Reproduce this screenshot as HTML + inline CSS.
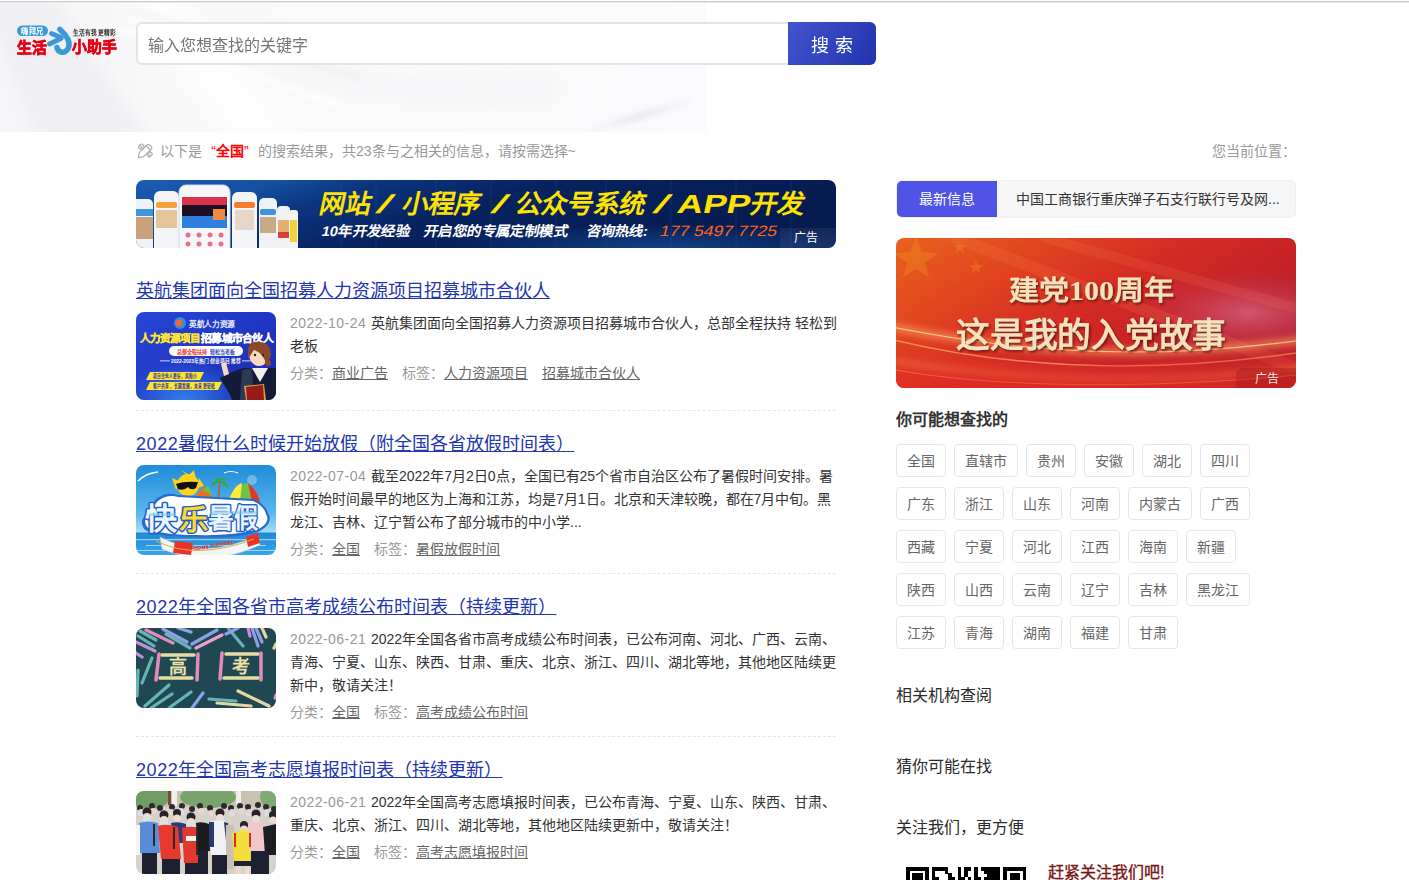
<!DOCTYPE html>
<html lang="zh-CN"><head><meta charset="utf-8">
<style>
*{margin:0;padding:0;box-sizing:border-box}
html,body{width:1409px;height:880px;overflow:hidden;background:#fff}
body{font-family:"Liberation Sans",sans-serif;color:#333;font-size:14px;position:relative}
.abs{position:absolute}
#topline{left:0;top:1px;width:1409px;height:2px;background:linear-gradient(#c9c9c9 0 50%,#ececec 50% 100%)}
#hdr{left:0;top:3px;width:706px;height:129px;overflow:hidden;background:#f7f7f9}
#logo{left:15px;top:24px;width:104px;height:32px}
#search{left:136px;top:22px;width:653px;height:43px;border:2px solid #e4e4e4;border-right:none;border-radius:6px 0 0 6px;background:#fff}
#search span{position:absolute;left:10px;top:11px;font-size:16px;color:#757575;line-height:22px;white-space:nowrap}
#btn{left:788px;top:22px;width:88px;height:43px;border-radius:0 6px 6px 0;background:linear-gradient(120deg,#4255cd,#2133ae);color:#fff;font-size:18px;line-height:43px;white-space:nowrap}
#btn span{position:absolute;top:2.5px}
#crumb{left:160px;top:141px;font-size:14px;color:#999;line-height:20px;white-space:nowrap}
#crumb b{color:#f00;font-weight:bold}
#crumb .q{display:inline-block;width:14px}
#pos{left:1212px;top:141px;font-size:14px;color:#999;line-height:20px;white-space:nowrap}
#ad1{left:136px;top:180px;width:700px;height:68px;border-radius:8px;overflow:hidden}
.t18{position:absolute;left:136px;font-size:18px;line-height:24px;color:#2236b0;text-decoration:underline;text-decoration-thickness:1px;text-underline-offset:1px;white-space:nowrap}
.n18{letter-spacing:.6px}
.thumb{position:absolute;left:136px;width:140px;border-radius:8px;overflow:hidden}
.desc{position:absolute;left:290px;font-size:14px;line-height:23px;color:#333;white-space:nowrap}
.desc .d{color:#999;display:inline-block;width:81px;letter-spacing:.45px}
.n{}
.meta{position:absolute;left:290px;font-size:14px;line-height:20px;color:#999;white-space:nowrap}
.meta u{color:#666;text-decoration:underline;text-underline-offset:1px}
.meta .g{display:inline-block;width:14px}
.sep{position:absolute;left:136px;width:700px;height:1px;border-top:1px dashed #e6e6e6}
#tab{left:896px;top:180px;width:400px;height:38px;border-radius:6px;background:#f6f6f6;border:1px solid #efefef}
#tab .t{position:absolute;left:0;top:0;width:100px;height:36px;background:#4f54e6;border-radius:5px 0 0 5px;color:#fff;text-align:center;line-height:36px;font-size:14px}
#tab .nw{position:absolute;left:119px;top:0;line-height:36px;font-size:14px;color:#333;white-space:nowrap}
#ad2{left:896px;top:238px;width:400px;height:150px;border-radius:8px;overflow:hidden}
.h4{position:absolute;left:896px;font-size:16px;font-weight:bold;color:#333;line-height:22px;white-space:nowrap}
.tag{position:absolute;height:33px;border:1px solid #e6e6e6;border-radius:4px;font-size:14px;color:#666;line-height:33px;text-align:center;white-space:nowrap}
.h4.m{font-weight:500;color:#2a2a2a}
.w2{width:50px}.w3{width:64px}
#qrtext{left:1048px;top:862px;font-size:16px;font-weight:500;color:#781616;-webkit-text-stroke:.35px #781616;line-height:22px;white-space:nowrap}
</style></head>
<body>
<div id="topline" class="abs"></div>
<div id="hdr" class="abs"><svg width="706" height="129" viewBox="0 0 706 129" style="display:block">
<defs><filter id="hb" x="-20%" y="-50%" width="140%" height="200%"><feGaussianBlur stdDeviation="7"/></filter>
<filter id="hb2" x="-20%" y="-50%" width="140%" height="200%"><feGaussianBlur stdDeviation="3"/></filter>
<linearGradient id="hg" x1="0" y1="0" x2="1" y2="0"><stop offset="0" stop-color="#f6f6f8"/><stop offset="0.45" stop-color="#fafafb"/><stop offset="1" stop-color="#fbfbfd"/></linearGradient></defs>
<rect width="706" height="129" fill="url(#hg)"/>
<g filter="url(#hb)">
<path d="M-20 -10 L50 -10 L150 140 L40 140 Z" fill="#eeeef1" opacity=".8"/>
<path d="M110 -10 L180 -10 L310 140 L230 140 Z" fill="#fdfdfe" opacity=".9"/>
<path d="M280 50 Q400 85 560 75 L560 100 Q400 110 280 75 Z" fill="#f3f3f6" opacity=".6"/>
</g>
<g filter="url(#hb2)">
<path d="M125 5 L360 75" stroke="#ececf0" stroke-width="4" opacity=".7"/>
<path d="M110 22 L340 102" stroke="#ffffff" stroke-width="5" opacity=".9"/>
<path d="M590 126 Q640 118 690 98" stroke="#eeeef2" stroke-width="4" opacity=".7"/>
</g>
</svg></div>
<div id="logo" class="abs"><svg width="104" height="32" viewBox="0 0 104 32" style="display:block;overflow:visible">
<rect x="2" y="1.5" width="31" height="10.5" rx="5.25" fill="#3a9ad9"/>
<text x="17.5" y="10" text-anchor="middle" font-family="Liberation Sans, sans-serif" font-weight="900" font-size="8.5" fill="#fff" textLength="23" lengthAdjust="spacingAndGlyphs">嗨拜兄</text>
<text x="2" y="28.5" font-family="Liberation Sans, sans-serif" font-weight="900" font-size="15" fill="#e60012" stroke="#e60012" stroke-width=".7" textLength="29.5" lengthAdjust="spacingAndGlyphs">生活</text>
<g fill="none" stroke="#3a9ad9" stroke-linecap="round">
<path d="M34.5 20 L46 14.5" stroke-width="4.8"/>
<path d="M36.5 9.5 L46 13.5" stroke-width="4.8"/>
<path d="M45 5.5 C51 11 55 17 54 22 C53 27 49 29 46 28 C44 27.5 42.5 26 42 23.5" stroke-width="5.6"/>
</g>
<text x="58" y="11" font-family="Liberation Sans, sans-serif" font-weight="bold" font-size="6.5" fill="#333" textLength="43" lengthAdjust="spacingAndGlyphs">生活有我更精彩</text>
<text x="57" y="28.3" font-family="Liberation Sans, sans-serif" font-weight="900" font-size="15" fill="#e60012" stroke="#e60012" stroke-width=".7" textLength="44.5" lengthAdjust="spacingAndGlyphs">小助手</text>
</svg></div>
<div id="search" class="abs"><span>输入您想查找的关键字</span></div>
<div id="btn" class="abs"><span style="left:23px">搜</span><span style="left:47px">索</span></div>
<svg class="abs" style="left:134px;top:140px" width="24" height="22" viewBox="0 0 24 22">
<g fill="none" stroke="#aeb2b6" stroke-width="1.25" stroke-linejoin="round" stroke-linecap="round">
<path d="M4.6 6.6 L7 4.3 Q7.6 3.8 8.2 4.3 L10.2 6.3 L6.9 9.6 L4.6 7.8 Q4.1 7.2 4.6 6.6 Z"/>
<path d="M6.6 6.2 L7.6 7.2"/>
<path d="M12.8 14.6 L16.1 11.3 L18.1 13.5 Q18.6 14.1 18.1 14.7 L15.8 17 Q15.2 17.5 14.6 17 Z"/>
<path d="M14.9 14.5 L15.9 15.5"/>
<path d="M4.3 17.6 L5.3 12.6 L13.2 4.8 Q14.3 3.8 15.4 4.8 L17.4 6.8 Q18.4 7.9 17.4 9 L9.6 16.6 Z"/>
<path d="M12.2 5.8 L16.5 10"/>
</g></svg>
<div id="crumb" class="abs">以下是<span class="q" style="text-align:right;color:#f00">“</span><b>全国</b><span class="q" style="color:#f00">”</span>的搜索结果，共<span class="n">23</span>条与之相关的信息，请按需选择~</div>
<div id="pos" class="abs">您当前位置：</div>
<div id="ad1" class="abs"><svg width="700" height="68" viewBox="0 0 700 68" style="display:block">
<defs>
<linearGradient id="a1bg" x1="0" y1="0" x2="1" y2="0.3">
<stop offset="0" stop-color="#1b5cb3"/><stop offset="0.2" stop-color="#144f9f"/><stop offset="0.32" stop-color="#0c357f"/><stop offset="0.55" stop-color="#07225f"/><stop offset="1" stop-color="#061b50"/>
</linearGradient>
<radialGradient id="a1glow" cx="0.62" cy="1" r="0.5"><stop offset="0" stop-color="#1d5fb0" stop-opacity=".55"/><stop offset="1" stop-color="#1d5fb0" stop-opacity="0"/></radialGradient>
</defs>
<rect width="700" height="68" fill="url(#a1bg)"/>
<rect x="250" y="20" width="450" height="48" fill="url(#a1glow)"/>
<g stroke="#2a6cc0" stroke-opacity=".22" stroke-width="1">
<line x1="205" y1="0" x2="205" y2="68"/><line x1="240" y1="0" x2="240" y2="68"/><line x1="300" y1="0" x2="300" y2="68"/><line x1="355" y1="0" x2="355" y2="68"/><line x1="420" y1="0" x2="420" y2="68"/><line x1="470" y1="0" x2="470" y2="68"/><line x1="535" y1="0" x2="535" y2="68"/><line x1="600" y1="0" x2="600" y2="68"/><line x1="655" y1="0" x2="655" y2="68"/>
</g>
<g>
<rect x="-4" y="19" width="21" height="60" rx="5" fill="#eef1f6"/><rect x="-4" y="29" width="21" height="7" fill="#3a97e0"/><rect x="-4" y="37" width="21" height="22" fill="#c9a27c"/>
<rect x="18" y="11" width="25" height="66" rx="6" fill="#f4f5f8"/><rect x="20" y="22" width="21" height="6" rx="2" fill="#f6a23a"/><rect x="20" y="30" width="21" height="18" fill="#e4c49a"/>
<rect x="43" y="5" width="51" height="70" rx="7" fill="#f6f7fa" stroke="#cfd8e6" stroke-width="1"/><rect x="46" y="17" width="45" height="8" fill="#d9324a"/><rect x="46" y="25" width="45" height="11" fill="#1e1024"/><rect x="46" y="36" width="45" height="12" fill="#2f7fe0"/><rect x="77" y="29" width="12" height="11" fill="#f08a40"/>
<g fill="#ea6f86"><circle cx="52" cy="55" r="2.5"/><circle cx="63" cy="55" r="2.5"/><circle cx="74" cy="55" r="2.5"/><circle cx="85" cy="55" r="2.5"/><circle cx="52" cy="64" r="2.5"/><circle cx="63" cy="64" r="2.5"/><circle cx="74" cy="64" r="2.5"/><circle cx="85" cy="64" r="2.5"/></g>
<rect x="96" y="12" width="25" height="64" rx="6" fill="#f4f5f8"/><rect x="98" y="22" width="21" height="6" rx="2" fill="#f47b30"/><rect x="99" y="30" width="19" height="20" fill="#e8d7c8"/>
<rect x="123" y="18" width="18" height="58" rx="5" fill="#eef1f6"/><rect x="124" y="29" width="16" height="6" rx="2" fill="#3f92e0"/><rect x="124" y="37" width="16" height="16" fill="#c7ab86"/>
<rect x="141" y="26" width="13" height="50" rx="4" fill="#f1f1f4"/><rect x="142" y="40" width="11" height="18" fill="#e4b070"/><rect x="142" y="52" width="11" height="6" fill="#d9403a"/>
<rect x="153" y="30" width="9" height="46" rx="3" fill="#f3f3f6"/><rect x="154" y="40" width="7" height="22" fill="#f2d23c"/>
</g>
<g font-family="Liberation Sans, sans-serif" font-weight="bold">
<g fill="#ffe200" font-size="26">
<text transform="translate(182,33) skewX(-12)" textLength="51" lengthAdjust="spacingAndGlyphs">网站</text>
<text transform="translate(239,33) skewX(-12)" textLength="17" lengthAdjust="spacingAndGlyphs" font-weight="normal">/</text>
<text transform="translate(265,33) skewX(-12)" textLength="78" lengthAdjust="spacingAndGlyphs">小程序</text>
<text transform="translate(354,33) skewX(-12)" textLength="17" lengthAdjust="spacingAndGlyphs" font-weight="normal">/</text>
<text transform="translate(378,33) skewX(-12)" textLength="130" lengthAdjust="spacingAndGlyphs">公众号系统</text>
<text transform="translate(516,33) skewX(-12)" textLength="17" lengthAdjust="spacingAndGlyphs" font-weight="normal">/</text>
<text transform="translate(540,33) skewX(-12)" textLength="73" lengthAdjust="spacingAndGlyphs">APP</text>
<text transform="translate(613,33) skewX(-12)" textLength="54" lengthAdjust="spacingAndGlyphs">开发</text>
</g>
<g fill="#ffffff" font-size="14">
<text transform="translate(185,56) skewX(-12)" textLength="88" lengthAdjust="spacingAndGlyphs">10年开发经验</text>
<text transform="translate(287,56) skewX(-12)" textLength="144" lengthAdjust="spacingAndGlyphs">开启您的专属定制模式</text>
<text transform="translate(450,56) skewX(-12)" textLength="61" lengthAdjust="spacingAndGlyphs">咨询热线:</text>
<text transform="translate(523,56) skewX(-14)" textLength="117" lengthAdjust="spacingAndGlyphs" fill="#ff661a" font-weight="normal" font-size="15">177 5497 7725</text>
</g>
</g>
<path d="M644 48 H700 V68 H644 Z" fill="#ffffff" fill-opacity=".06"/>
<text x="658" y="62" font-family="Liberation Sans, sans-serif" font-size="12" fill="#ffffff">广告</text>
</svg></div>

<div class="t18" style="top:279px">英航集团面向全国招募人力资源项目招募城市合伙人</div>
<div class="thumb" style="top:312px;height:88px" id="th1"><svg width="140" height="88" viewBox="0 0 140 88" style="display:block">
<defs>
<linearGradient id="t1a" x1="0" y1="0" x2="1" y2="1"><stop offset="0" stop-color="#2746d6"/><stop offset="0.5" stop-color="#2137c4"/><stop offset="1" stop-color="#1b2aa8"/></linearGradient>
<radialGradient id="t1b" cx="0.35" cy="1" r="0.45"><stop offset="0" stop-color="#3aa0ff" stop-opacity=".7"/><stop offset="1" stop-color="#3aa0ff" stop-opacity="0"/></radialGradient>
</defs>
<rect width="140" height="88" fill="url(#t1a)"/>
<rect width="140" height="88" fill="url(#t1b)"/>
<circle cx="44" cy="11" r="6" fill="#2b8ee6"/><circle cx="43" cy="11" r="3.5" fill="#f06a2a"/>
<g font-family="Liberation Sans, sans-serif" font-weight="900">
<text x="53" y="15" font-size="8" fill="#e8eeff" textLength="46" lengthAdjust="spacingAndGlyphs">英航人力资源</text>
<text x="4" y="29.5" font-size="10.5" fill="#ffe431" stroke="#ffe431" stroke-width=".35" textLength="60" lengthAdjust="spacingAndGlyphs">人力资源项目</text>
<text x="65" y="29.5" font-size="10.5" fill="#ffffff" stroke="#ffffff" stroke-width=".35" textLength="72" lengthAdjust="spacingAndGlyphs">招募城市合伙人</text>
</g>
<rect x="33" y="34" width="74" height="10" rx="5" fill="#ffffff"/>
<g font-family="Liberation Sans, sans-serif" font-weight="bold" font-size="6">
<text x="41" y="41.5" fill="#e8322a" textLength="30" lengthAdjust="spacingAndGlyphs">总部全程扶持</text>
<text x="74" y="41.5" fill="#3b4ab8" textLength="25" lengthAdjust="spacingAndGlyphs">轻松当老板</text>
<text x="35" y="51" fill="#ffffff" font-size="5.5" textLength="70" lengthAdjust="spacingAndGlyphs">2022-2023年热门创业项目推荐</text>
</g>
<rect x="24" y="48.5" width="10" height="0.8" fill="#ffffff"/><rect x="106" y="48.5" width="10" height="0.8" fill="#ffffff"/>
<path d="M14 60 H68 L64 68 H10 Z" fill="#ffe431"/>
<path d="M14 70 H86 L82 78 H10 Z" fill="#ffe431"/>
<g font-family="Liberation Sans, sans-serif" font-weight="bold" font-size="5.5" fill="#1b2aa8">
<text x="17" y="66" textLength="44" lengthAdjust="spacingAndGlyphs">项目合伙人更好，风险小</text>
<text x="17" y="76" textLength="62" lengthAdjust="spacingAndGlyphs">客户共享，长期发展，未来更轻松</text>
</g>
<path d="M88 64 Q100 58 108 56 L140 56 L140 88 L96 88 Z" fill="#141b38"/>
<path d="M116 56 L124 70 L132 56 Z" fill="#f2f0ee"/>
<path d="M106 58 L116 56 L118 88 L104 88 Z" fill="#2a3a55"/>
<path d="M84 66 L92 62 L104 80 L96 86 Z" fill="#141b38"/>
<ellipse cx="123" cy="42" rx="10" ry="12" fill="#f7d9c4"/>
<path d="M112 41 Q111 28 124 30 Q135 31 135 43 Q133 50 130 53 Q128 41 118 38 Q114 44 112 47 Z" fill="#8a4a2a"/>
<circle cx="132" cy="51" r="3" fill="#8a4a2a"/>
<circle cx="119" cy="43" r="1.2" fill="#3a2020"/><circle cx="127" cy="43" r="1.2" fill="#3a2020"/>
<path d="M85 52 L90 50 L93 62 L88 64 Z" fill="#f7d9c4"/>
<path d="M108 74 L128 72 L130 88 L110 88 Z" fill="#d8a044"/>
<path d="M110 75 L127 73 L128 88 L111 88 Z" fill="#9a1a1a"/>
</svg></div>
<div class="desc" style="top:312px"><span class="d">2022-10-24</span>英航集团面向全国招募人力资源项目招募城市合伙人，总部全程扶持 轻松到<br>老板</div>
<div class="meta" style="top:363px">分类：<u>商业广告</u><span class="g"></span>标签：<u>人力资源项目</u><span class="g"></span><u>招募城市合伙人</u></div>
<div class="sep" style="top:410px"></div>

<div class="t18" style="top:432px"><span class="n18">2022</span>暑假什么时候开始放假（附全国各省放假时间表）</div>
<div class="thumb" style="top:465px;height:90px" id="th2"><svg width="140" height="90" viewBox="0 0 140 90" style="display:block">
<defs>
<linearGradient id="t2a" x1="0" y1="0" x2="0" y2="1"><stop offset="0" stop-color="#1e8cd9"/><stop offset="0.55" stop-color="#5cb8ee"/><stop offset="0.74" stop-color="#a8dcf6"/><stop offset="0.76" stop-color="#1f8ad6"/><stop offset="1" stop-color="#38a6e8"/></linearGradient>
</defs>
<rect width="140" height="90" fill="url(#t2a)"/>
<g fill="#ffffff" fill-opacity=".55"><rect x="0" y="74" width="140" height="1.2"/><rect x="10" y="80" width="120" height="1"/><rect x="0" y="85" width="140" height="1"/></g>
<path d="M2 16 Q10 8 22 7" stroke="#ffffff" stroke-width="1.5" fill="none"/>
<path d="M88 8 Q95 5 102 8" stroke="#ffffff" stroke-width="1.2" fill="none"/>
<circle cx="116" cy="15" r="5" fill="#ffffff" fill-opacity=".3"/>
<g fill="#ffd21a"><circle cx="52" cy="20" r="11"/><path d="M45 5 L52 11 L58 5 L60 14 Z"/><path d="M36 13 L45 17 L40 25 Z"/><path d="M63 13 L68 21 L61 23 Z"/></g>
<path d="M40 19 Q48 16 62 17 L60 23 Q55 26 52 22 Q48 26 42 24 Z" fill="#111"/>
<path d="M60 32 Q64 22 70 21 L76 32 Z" fill="#ef6a22"/><path d="M66 25 L72 21 L76 30 Z" fill="#5fc84a"/>
<path d="M82 36 L84 16" stroke="#b06a2a" stroke-width="1.8"/>
<path d="M74 16 Q84 10 94 16 Q86 13 84 16 Q80 13 74 16 Z" fill="#3aa53a"/><path d="M76 20 Q84 12 92 22" stroke="#3aa53a" stroke-width="2.5" fill="none"/>
<path d="M92 37 Q98 20 112 18 Q122 26 124 37 Z" fill="#6cc24a"/><path d="M92 37 Q98 20 106 18 L104 37 Z" fill="#ffe93a"/><path d="M112 18 Q122 26 124 37 L116 37 Z" fill="#e8322a"/>
<path d="M24 72 Q70 96 122 70 L124 80 Q72 104 26 84 Z" fill="#f4f4f4" stroke="#b8c8d8" stroke-width=".6"/>
<path d="M39 76 L57 78 L55 90 L37 88 Z" fill="#e8322a"/>
<path d="M110 72 L122 68 L124 78 L112 82 Z" fill="#e8322a"/>
<text x="55" y="86" font-family="Liberation Sans, sans-serif" font-weight="bold" font-size="6" fill="#e8322a" transform="rotate(-10 55 86)">Happy summer</text>
<path d="M20 76 Q60 96 118 74" stroke="#e0b040" stroke-width="1" fill="none"/>
<path d="M8 64 Q2 54 12 50 Q14 40 20 34 Q30 26 42 30 L118 34 Q130 40 132 48 Q138 58 124 66 Q100 74 60 72 Q20 72 8 64 Z" fill="#2a6ad0"/>
<path d="M11 62 Q6 54 14 51 Q16 41 22 36 Q31 29 42 32 L117 36 Q128 41 130 49 Q135 57 123 64 Q100 71 60 70 Q22 70 11 62 Z" fill="#ffffff"/>
<g font-family="Liberation Sans, sans-serif" font-weight="bold" font-size="30" paint-order="stroke" stroke-linejoin="round">
<text x="9" y="64" fill="#eaf6ff" stroke="#1f5ccc" stroke-width="3" textLength="32" lengthAdjust="spacingAndGlyphs">快</text>
<text x="43" y="65" fill="#ffd92a" stroke="#1f5ccc" stroke-width="3" textLength="29" lengthAdjust="spacingAndGlyphs" font-size="28">乐</text>
<text x="72" y="63" fill="#eaf6ff" stroke="#1f5ccc" stroke-width="3" textLength="26" lengthAdjust="spacingAndGlyphs" font-size="27">暑</text>
<text x="98" y="63" fill="#eaf6ff" stroke="#1f5ccc" stroke-width="3" textLength="24" lengthAdjust="spacingAndGlyphs" font-size="27">假</text>
</g>
<g fill="#7cc6f2" fill-opacity=".55"><rect x="14" y="48" width="26" height="3"/><rect x="74" y="46" width="46" height="3"/></g>
</svg></div>
<div class="desc" style="top:465px"><span class="d">2022-07-04</span>截至<span class="n">2022</span>年<span class="n">7</span>月<span class="n">2</span>日<span class="n">0</span>点，全国已有<span class="n">25</span>个省市自治区公布了暑假时间安排。暑<br>假开始时间最早的地区为上海和江苏，均是<span class="n">7</span>月<span class="n">1</span>日。北京和天津较晚，都在<span class="n">7</span>月中旬。黑<br>龙江、吉林、辽宁暂公布了部分城市的中小学...</div>
<div class="meta" style="top:539px">分类：<u>全国</u><span class="g"></span>标签：<u>暑假放假时间</u></div>
<div class="sep" style="top:573px"></div>

<div class="t18" style="top:595px"><span class="n18">2022</span>年全国各省市高考成绩公布时间表（持续更新）</div>
<div class="thumb" style="top:628px;height:80px" id="th3"><svg width="140" height="80" viewBox="0 0 140 80" style="display:block">
<rect width="140" height="80" fill="#1f4853"/>
<g stroke-linecap="round" stroke-width="3.2">
<line x1="4" y1="3" x2="20" y2="12" stroke="#66b4b6"/>
<line x1="10" y1="2" x2="37" y2="15" stroke="#e08cbc"/>
<line x1="2" y1="8" x2="18" y2="18" stroke="#66b4b6"/>
<line x1="0" y1="14" x2="19" y2="23" stroke="#c48ee0"/>
<line x1="0" y1="25" x2="6" y2="29" stroke="#c48ee0"/>
<line x1="27" y1="1" x2="51" y2="14" stroke="#8fa0e8"/>
<line x1="30" y1="6" x2="54" y2="20" stroke="#66b4b6"/>
<line x1="42" y1="0" x2="55" y2="4" stroke="#8fa0e8"/>
<line x1="56" y1="16" x2="81" y2="2" stroke="#8fa0e8"/>
<line x1="60" y1="20" x2="86" y2="7" stroke="#e9a0d0"/>
<line x1="92" y1="0" x2="107" y2="18" stroke="#66b4b6"/>
<line x1="90" y1="6" x2="102" y2="0" stroke="#8fa0e8"/>
<line x1="112" y1="0" x2="114" y2="8" stroke="#c48ee0"/>
<line x1="116" y1="0" x2="122" y2="18" stroke="#8fa0e8"/>
<line x1="120" y1="0" x2="126" y2="14" stroke="#8fa0e8"/>
<line x1="126" y1="0" x2="130" y2="9" stroke="#e6d6a0"/>
<line x1="140" y1="16" x2="138" y2="20" stroke="#e6d6a0"/>
<line x1="16" y1="30" x2="6" y2="55" stroke="#66b4b6"/>
<line x1="2" y1="42" x2="1" y2="68" stroke="#66b4b6"/>
<line x1="33" y1="57" x2="9" y2="78" stroke="#66b4b6"/>
<line x1="36" y1="66" x2="15" y2="80" stroke="#66b4b6"/>
<line x1="55" y1="64" x2="33" y2="80" stroke="#66b4b6"/>
<line x1="67" y1="65" x2="56" y2="80" stroke="#8fa0e8"/>
<line x1="73" y1="71" x2="100" y2="73" stroke="#66b4b6"/>
<line x1="81" y1="75" x2="115" y2="78" stroke="#e6d6a0"/>
<line x1="102" y1="63" x2="133" y2="78" stroke="#e6d6a0"/>
<line x1="140" y1="67" x2="139" y2="70" stroke="#e08cbc"/>
</g>
<g stroke-linecap="round" stroke-width="3.5">
<line x1="26" y1="27" x2="58" y2="27" stroke="#e7dca0"/>
<line x1="24" y1="50" x2="56" y2="50" stroke="#e7dca0"/>
<line x1="23" y1="26" x2="20" y2="52" stroke="#e08cbc"/>
<line x1="62" y1="26" x2="61" y2="52" stroke="#e08cbc"/>
<line x1="90" y1="26" x2="122" y2="26" stroke="#e7dca0"/>
<line x1="88" y1="50" x2="122" y2="50" stroke="#e7dca0"/>
<line x1="86" y1="25" x2="84" y2="51" stroke="#e08cbc"/>
<line x1="125" y1="25" x2="125" y2="52" stroke="#e08cbc"/>
</g>
<g font-family="Liberation Serif, serif" font-weight="bold" font-size="18" fill="#eee0a6">
<text x="33" y="45">高</text><text x="96" y="45">考</text>
</g>
</svg></div>
<div class="desc" style="top:628px"><span class="d">2022-06-21</span><span class="n">2022</span>年全国各省市高考成绩公布时间表，已公布河南、河北、广西、云南、<br>青海、宁夏、山东、陕西、甘肃、重庆、北京、浙江、四川、湖北等地，其他地区陆续更<br>新中，敬请关注！</div>
<div class="meta" style="top:702px">分类：<u>全国</u><span class="g"></span>标签：<u>高考成绩公布时间</u></div>
<div class="sep" style="top:736px"></div>

<div class="t18" style="top:758px"><span class="n18">2022</span>年全国高考志愿填报时间表（持续更新）</div>
<div class="thumb" style="top:791px;height:83px" id="th4"><svg width="140" height="83" viewBox="0 0 140 83" style="display:block">
<rect width="140" height="83" fill="#d6d2ca"/>
<rect x="0" y="0" width="140" height="16" fill="#c8c2b2"/>
<ellipse cx="14" cy="6" rx="20" ry="12" fill="#6f9c62"/>
<ellipse cx="72" cy="6" rx="28" ry="11" fill="#79a36c"/>
<ellipse cx="134" cy="6" rx="10" ry="11" fill="#80aa74"/>
<rect x="36" y="0" width="5" height="15" fill="#f2efe8"/><rect x="100" y="0" width="5" height="14" fill="#f2efe8"/>
<rect x="32" y="0" width="3" height="14" fill="#7a4a3a"/>
<g fill="#2c2a2c">
<circle cx="4" cy="17" r="3"/><circle cx="16" cy="15" r="3"/><circle cx="24" cy="17" r="3"/><circle cx="36" cy="16" r="3"/><circle cx="46" cy="15" r="3"/><circle cx="56" cy="18" r="3"/><circle cx="64" cy="15" r="3"/><circle cx="74" cy="17" r="3"/><circle cx="88" cy="15" r="3"/><circle cx="95" cy="17" r="3"/><circle cx="104" cy="15" r="3"/><circle cx="112" cy="16" r="3"/><circle cx="122" cy="14" r="3"/><circle cx="130" cy="16" r="3"/><circle cx="138" cy="18" r="3"/>
</g>
<g fill="#e6d6cc">
<circle cx="5" cy="21" r="3"/><circle cx="17" cy="20" r="3"/><circle cx="35" cy="21" r="3"/><circle cx="45" cy="20" r="3"/><circle cx="65" cy="20" r="3"/><circle cx="75" cy="22" r="3"/><circle cx="96" cy="21" r="3"/><circle cx="105" cy="20" r="3"/><circle cx="113" cy="21" r="3"/><circle cx="131" cy="21" r="3"/>
</g>
<g fill="#cfe2ec"><rect x="2" y="22" width="6" height="3" rx="1"/><rect x="42" y="21" width="6" height="3" rx="1"/><rect x="93" y="22" width="6" height="3" rx="1"/><rect x="110" y="22" width="6" height="3" rx="1"/><rect x="128" y="22" width="6" height="3" rx="1"/></g>
<g fill="#262426"><circle cx="11" cy="21" r="4.5"/><circle cx="28" cy="24" r="4.5"/><circle cx="41" cy="22" r="4"/><circle cx="55" cy="26" r="4.5"/><circle cx="84" cy="22" r="4.5"/><circle cx="108" cy="34" r="4"/><circle cx="120" cy="23" r="4.5"/><circle cx="137" cy="24" r="4"/></g>
<g fill="#eedcd0"><circle cx="11" cy="26" r="4"/><circle cx="28" cy="29" r="4"/><circle cx="41" cy="27" r="3.5"/><circle cx="55" cy="31" r="4"/><circle cx="84" cy="27" r="4"/><circle cx="108" cy="38" r="3.5"/><circle cx="120" cy="28" r="4"/><circle cx="137" cy="29" r="3.5"/></g>
<g fill="#d2e4ee"><rect x="7" y="27" width="8" height="4" rx="1.5"/><rect x="24" y="30" width="8" height="4" rx="1.5"/><rect x="51" y="32" width="8" height="4" rx="1.5"/><rect x="80" y="28" width="8" height="4" rx="1.5"/><rect x="116" y="29" width="8" height="4" rx="1.5"/></g>
<rect x="105" y="38" width="7" height="3" rx="1" fill="#f0e070"/>
<path d="M3 32 Q12 29 22 32 L24 62 L4 62 Z" fill="#5a8cd8"/>
<path d="M35 32 Q42 30 50 33 L50 52 L38 52 Z" fill="#2c3c78"/>
<path d="M22 35 Q30 32 42 36 L45 68 L25 68 Z" fill="#e63a30"/>
<path d="M46 37 Q56 34 67 38 L70 72 L48 72 Z" fill="#e4382e"/>
<rect x="50" y="45" width="12" height="5" fill="#f5f5f5"/>
<path d="M60 32 Q66 30 73 33 L74 60 L62 60 Z" fill="#1c1c1e"/>
<path d="M73 31 Q82 28 91 31 L93 64 L75 64 Z" fill="#f1f1f5"/>
<path d="M73 31 L78 31 L78 56 L73 56 Z" fill="#2a3a70"/><path d="M88 31 L92 32 L94 50 L90 50 Z" fill="#2a3a70"/>
<path d="M90 34 L98 34 L98 78 L90 78 Z" fill="#c9c2b4"/>
<path d="M96 42 Q106 38 116 42 L118 70 L98 70 Z" fill="#f3dc3c"/>
<path d="M112 32 Q120 29 129 32 L131 60 L114 60 Z" fill="#f1c8c8"/>
<path d="M127 36 L140 33 L140 64 L129 64 Z" fill="#1e1e22"/>
<path d="M0 34 L4 34 L4 64 L0 64 Z" fill="#f5f5f5"/>
<g fill="#1c2030"><rect x="6" y="62" width="15" height="21"/><rect x="26" y="68" width="18" height="15"/><rect x="49" y="72" width="20" height="11"/><rect x="76" y="64" width="15" height="19"/><rect x="98" y="70" width="18" height="5"/><rect x="115" y="60" width="18" height="23"/><rect x="62" y="60" width="10" height="23"/></g>
<g fill="#f0d6c8"><rect x="100" y="75" width="5" height="8"/><rect x="109" y="75" width="5" height="8"/></g>
<g fill="#2a2a2a"><rect x="17" y="33" width="2" height="22"/><rect x="37" y="36" width="2" height="22"/><rect x="60" y="38" width="2" height="26"/></g>
<g fill="#d03030"><rect x="98" y="42" width="2" height="14"/><rect x="113" y="42" width="2" height="14"/></g>
</svg></div>
<div class="desc" style="top:791px"><span class="d">2022-06-21</span><span class="n">2022</span>年全国高考志愿填报时间表，已公布青海、宁夏、山东、陕西、甘肃、<br>重庆、北京、浙江、四川、湖北等地，其他地区陆续更新中，敬请关注！</div>
<div class="meta" style="top:842px">分类：<u>全国</u><span class="g"></span>标签：<u>高考志愿填报时间</u></div>

<div id="tab" class="abs"><div class="t">最新信息</div><div class="nw">中国工商银行重庆弹子石支行联行号及网...</div></div>
<div id="ad2" class="abs"><svg width="400" height="150" viewBox="0 0 400 150" style="display:block">
<defs>
<linearGradient id="b1" x1="0" y1="0" x2="1" y2="0.6">
<stop offset="0" stop-color="#e9621e"/><stop offset="0.3" stop-color="#e0431f"/><stop offset="0.55" stop-color="#d42b24"/><stop offset="0.8" stop-color="#c42228"/><stop offset="1" stop-color="#b51d2a"/>
</linearGradient>
<radialGradient id="b2" cx="0.88" cy="0.5" r="0.3"><stop offset="0" stop-color="#d46a86" stop-opacity=".75"/><stop offset="1" stop-color="#c03050" stop-opacity="0"/></radialGradient>
<linearGradient id="b3" x1="0" y1="0" x2="0" y2="1"><stop offset="0" stop-color="#e83a2a" stop-opacity="0"/><stop offset="1" stop-color="#e42a22" stop-opacity="1"/></linearGradient>
<filter id="sh" x="-10%" y="-10%" width="120%" height="130%"><feDropShadow dx="1.5" dy="2" stdDeviation="1.2" flood-color="#5a0a08" flood-opacity=".75"/></filter>
</defs>
<rect width="400" height="150" fill="url(#b1)"/>
<rect width="400" height="150" fill="url(#b2)"/>
<g fill="#f0a020" fill-opacity=".28">
<path d="M20 0 L25 14 L40 16 L28 24 L32 38 L20 30 L8 38 L12 24 L0 16 L15 14 Z" transform="translate(-2,-2) scale(1.1)"/>
<path d="M64 2 L66 7 L71 7 L67 10 L68 15 L64 12 L60 15 L61 10 L57 7 L62 7 Z"/>
<path d="M80 22 L82 27 L87 27 L83 30 L84 35 L80 32 L76 35 L77 30 L73 27 L78 27 Z"/>
</g>
<defs><filter id="gb" x="-10%" y="-50%" width="120%" height="200%"><feGaussianBlur stdDeviation="3"/></filter></defs>
<g fill="none" stroke-linecap="round">
<path d="M60 0 L 400 130" stroke="#ff8a50" stroke-opacity=".16" stroke-width="12"/>
<path d="M150 0 L 400 70" stroke="#ff9060" stroke-opacity=".12" stroke-width="10"/>
<path d="M-10 88 C 80 105, 220 130, 420 100" stroke="#ffa060" stroke-opacity=".55" stroke-width="9" filter="url(#gb)"/>
<path d="M-10 88 C 80 105, 220 130, 420 100" stroke="#ffd890" stroke-opacity=".8" stroke-width="1.2"/>
<path d="M-10 100 C 90 125, 230 142, 420 112" stroke="#ffc070" stroke-opacity=".6" stroke-width="1.5"/>
<path d="M0 124 C 120 142, 260 150, 420 128" stroke="#ffb060" stroke-opacity=".45" stroke-width="6" filter="url(#gb)"/>
<path d="M0 132 C 100 150, 260 152, 420 135" stroke="#ffe0a0" stroke-opacity=".6" stroke-width="1"/>
</g>
<path d="M0 110 C 100 130, 250 140, 400 100 L400 150 L0 150 Z" fill="url(#b3)" opacity=".7"/>
<g filter="url(#sh)" fill="#f3e2bb">
<text x="113" y="62" font-family="Liberation Serif, serif" font-weight="bold" font-size="27" textLength="165" lengthAdjust="spacingAndGlyphs">建党100周年</text>
<text x="60" y="109" font-family="Liberation Sans, sans-serif" font-weight="bold" font-size="34" textLength="270" lengthAdjust="spacingAndGlyphs">这是我的入党故事</text>
</g>
<path d="M340 150 V138 Q340 130 348 130 H400 V150 Z" fill="#a01818" fill-opacity=".35"/>
<text x="359" y="145" font-family="Liberation Sans, sans-serif" font-size="12" fill="#ffffff" fill-opacity=".9">广告</text>
</svg></div>
<div class="h4" style="top:409px">你可能想查找的</div>
<div class="tag w2" style="left:896px;top:444px">全国</div>
<div class="tag w3" style="left:954px;top:444px">直辖市</div>
<div class="tag w2" style="left:1026px;top:444px">贵州</div>
<div class="tag w2" style="left:1084px;top:444px">安徽</div>
<div class="tag w2" style="left:1142px;top:444px">湖北</div>
<div class="tag w2" style="left:1200px;top:444px">四川</div>
<div class="tag w2" style="left:896px;top:487px">广东</div>
<div class="tag w2" style="left:954px;top:487px">浙江</div>
<div class="tag w2" style="left:1012px;top:487px">山东</div>
<div class="tag w2" style="left:1070px;top:487px">河南</div>
<div class="tag w3" style="left:1128px;top:487px">内蒙古</div>
<div class="tag w2" style="left:1200px;top:487px">广西</div>
<div class="tag w2" style="left:896px;top:530px">西藏</div>
<div class="tag w2" style="left:954px;top:530px">宁夏</div>
<div class="tag w2" style="left:1012px;top:530px">河北</div>
<div class="tag w2" style="left:1070px;top:530px">江西</div>
<div class="tag w2" style="left:1128px;top:530px">海南</div>
<div class="tag w2" style="left:1186px;top:530px">新疆</div>
<div class="tag w2" style="left:896px;top:573px">陕西</div>
<div class="tag w2" style="left:954px;top:573px">山西</div>
<div class="tag w2" style="left:1012px;top:573px">云南</div>
<div class="tag w2" style="left:1070px;top:573px">辽宁</div>
<div class="tag w2" style="left:1128px;top:573px">吉林</div>
<div class="tag w3" style="left:1186px;top:573px">黑龙江</div>
<div class="tag w2" style="left:896px;top:616px">江苏</div>
<div class="tag w2" style="left:954px;top:616px">青海</div>
<div class="tag w2" style="left:1012px;top:616px">湖南</div>
<div class="tag w2" style="left:1070px;top:616px">福建</div>
<div class="tag w2" style="left:1128px;top:616px">甘肃</div>
<div class="h4 m" style="top:685px">相关机构查阅</div>
<div class="h4 m" style="top:756px">猜你可能在找</div>
<div class="h4 m" style="top:817px">关注我们，更方便</div>
<div id="qr" class="abs" style="left:906px;top:867px;width:120px;height:13px;overflow:hidden"><svg width="120" height="13" viewBox="0 0 120 13" style="display:block" shape-rendering="crispEdges"><g fill="#000"><rect x="0.00" y="0.00" width="3.54" height="3.54"/><rect x="3.24" y="0.00" width="3.54" height="3.54"/><rect x="6.49" y="0.00" width="3.54" height="3.54"/><rect x="9.73" y="0.00" width="3.54" height="3.54"/><rect x="12.97" y="0.00" width="3.54" height="3.54"/><rect x="16.22" y="0.00" width="3.54" height="3.54"/><rect x="19.46" y="0.00" width="3.54" height="3.54"/><rect x="25.95" y="0.00" width="3.54" height="3.54"/><rect x="29.19" y="0.00" width="3.54" height="3.54"/><rect x="32.43" y="0.00" width="3.54" height="3.54"/><rect x="35.68" y="0.00" width="3.54" height="3.54"/><rect x="38.92" y="0.00" width="3.54" height="3.54"/><rect x="51.89" y="0.00" width="3.54" height="3.54"/><rect x="58.38" y="0.00" width="3.54" height="3.54"/><rect x="61.62" y="0.00" width="3.54" height="3.54"/><rect x="68.11" y="0.00" width="3.54" height="3.54"/><rect x="74.59" y="0.00" width="3.54" height="3.54"/><rect x="77.84" y="0.00" width="3.54" height="3.54"/><rect x="81.08" y="0.00" width="3.54" height="3.54"/><rect x="84.32" y="0.00" width="3.54" height="3.54"/><rect x="87.57" y="0.00" width="3.54" height="3.54"/><rect x="90.81" y="0.00" width="3.54" height="3.54"/><rect x="97.30" y="0.00" width="3.54" height="3.54"/><rect x="100.54" y="0.00" width="3.54" height="3.54"/><rect x="103.78" y="0.00" width="3.54" height="3.54"/><rect x="107.03" y="0.00" width="3.54" height="3.54"/><rect x="110.27" y="0.00" width="3.54" height="3.54"/><rect x="113.51" y="0.00" width="3.54" height="3.54"/><rect x="116.76" y="0.00" width="3.54" height="3.54"/><rect x="0.00" y="3.24" width="3.54" height="3.54"/><rect x="19.46" y="3.24" width="3.54" height="3.54"/><rect x="25.95" y="3.24" width="3.54" height="3.54"/><rect x="38.92" y="3.24" width="3.54" height="3.54"/><rect x="51.89" y="3.24" width="3.54" height="3.54"/><rect x="58.38" y="3.24" width="3.54" height="3.54"/><rect x="68.11" y="3.24" width="3.54" height="3.54"/><rect x="77.84" y="3.24" width="3.54" height="3.54"/><rect x="81.08" y="3.24" width="3.54" height="3.54"/><rect x="84.32" y="3.24" width="3.54" height="3.54"/><rect x="87.57" y="3.24" width="3.54" height="3.54"/><rect x="90.81" y="3.24" width="3.54" height="3.54"/><rect x="97.30" y="3.24" width="3.54" height="3.54"/><rect x="116.76" y="3.24" width="3.54" height="3.54"/><rect x="0.00" y="6.49" width="3.54" height="3.54"/><rect x="6.49" y="6.49" width="3.54" height="3.54"/><rect x="9.73" y="6.49" width="3.54" height="3.54"/><rect x="12.97" y="6.49" width="3.54" height="3.54"/><rect x="19.46" y="6.49" width="3.54" height="3.54"/><rect x="25.95" y="6.49" width="3.54" height="3.54"/><rect x="42.16" y="6.49" width="3.54" height="3.54"/><rect x="51.89" y="6.49" width="3.54" height="3.54"/><rect x="58.38" y="6.49" width="3.54" height="3.54"/><rect x="68.11" y="6.49" width="3.54" height="3.54"/><rect x="81.08" y="6.49" width="3.54" height="3.54"/><rect x="84.32" y="6.49" width="3.54" height="3.54"/><rect x="87.57" y="6.49" width="3.54" height="3.54"/><rect x="90.81" y="6.49" width="3.54" height="3.54"/><rect x="97.30" y="6.49" width="3.54" height="3.54"/><rect x="103.78" y="6.49" width="3.54" height="3.54"/><rect x="107.03" y="6.49" width="3.54" height="3.54"/><rect x="110.27" y="6.49" width="3.54" height="3.54"/><rect x="116.76" y="6.49" width="3.54" height="3.54"/><rect x="0.00" y="9.73" width="3.54" height="3.54"/><rect x="6.49" y="9.73" width="3.54" height="3.54"/><rect x="9.73" y="9.73" width="3.54" height="3.54"/><rect x="12.97" y="9.73" width="3.54" height="3.54"/><rect x="19.46" y="9.73" width="3.54" height="3.54"/><rect x="25.95" y="9.73" width="3.54" height="3.54"/><rect x="29.19" y="9.73" width="3.54" height="3.54"/><rect x="42.16" y="9.73" width="3.54" height="3.54"/><rect x="45.41" y="9.73" width="3.54" height="3.54"/><rect x="51.89" y="9.73" width="3.54" height="3.54"/><rect x="55.14" y="9.73" width="3.54" height="3.54"/><rect x="61.62" y="9.73" width="3.54" height="3.54"/><rect x="68.11" y="9.73" width="3.54" height="3.54"/><rect x="71.35" y="9.73" width="3.54" height="3.54"/><rect x="77.84" y="9.73" width="3.54" height="3.54"/><rect x="81.08" y="9.73" width="3.54" height="3.54"/><rect x="84.32" y="9.73" width="3.54" height="3.54"/><rect x="87.57" y="9.73" width="3.54" height="3.54"/><rect x="90.81" y="9.73" width="3.54" height="3.54"/><rect x="97.30" y="9.73" width="3.54" height="3.54"/><rect x="103.78" y="9.73" width="3.54" height="3.54"/><rect x="107.03" y="9.73" width="3.54" height="3.54"/><rect x="110.27" y="9.73" width="3.54" height="3.54"/><rect x="116.76" y="9.73" width="3.54" height="3.54"/></g></svg></div>
<div id="qrtext" class="abs">赶紧关注我们吧!</div>
</body></html>
